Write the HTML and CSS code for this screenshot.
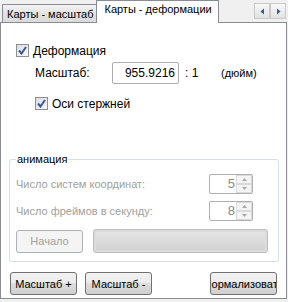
FILE: index.html
```html
<!DOCTYPE html>
<html lang="ru">
<head>
    <meta charset="UTF-8">
    <title>Карты - деформации</title>
    <link rel="stylesheet" href="styles.css">
</head>
<body>
    <div class="window">
        <div class="tab-strip">
            <div class="tab">Карты - масштаб</div>
            <div class="tab active">Карты - деформации</div>
            <div class="scroller">
                <span class="arrow"><svg width="7" height="7" viewBox="0 0 7 7"><path d="M5 0.5 L1.5 3.5 L5 6.5 Z" fill="#3c5a8c"/></svg></span>
                <span class="arrow"><svg width="7" height="7" viewBox="0 0 7 7"><path d="M2 0.5 L5.5 3.5 L2 6.5 Z" fill="#3c5a8c"/></svg></span>
            </div>
        </div>

        <div class="panel">
            <label class="check-row">
                <span class="box"><svg width="9" height="9" viewBox="0 0 9 9"><path d="M1 4.5 L3.5 7.5 L8 1" stroke="#3a55a0" stroke-width="2" fill="none"/></svg></span>
                Деформация
            </label>

            <div class="scale-row">
                <span class="scale-label">Масштаб:</span>
                <span class="field">955.9216</span>
                <span class="ratio">: 1</span>
                <span class="unit">(дюйм)</span>
            </div>

            <label class="check-row sub">
                <span class="box"><svg width="9" height="9" viewBox="0 0 9 9"><path d="M1 4.5 L3.5 7.5 L8 1" stroke="#3a55a0" stroke-width="2" fill="none"/></svg></span>
                Оси стержней
            </label>

            <fieldset class="group">
                <legend>анимация</legend>
                <div class="spin-row">
                    <span>Число систем координат:</span>
                    <span class="spin">
                        <span class="spin-value">5</span>
                        <span class="spin-buttons">
                            <span class="spin-btn"><svg width="5" height="3" viewBox="0 0 5 3"><path d="M0 3 L2.5 0 L5 3 Z" fill="#a8a8a8"/></svg></span>
                            <span class="spin-btn"><svg width="5" height="3" viewBox="0 0 5 3"><path d="M0 0 L2.5 3 L5 0 Z" fill="#a8a8a8"/></svg></span>
                        </span>
                    </span>
                </div>
                <div class="spin-row">
                    <span>Число фреймов в секунду:</span>
                    <span class="spin">
                        <span class="spin-value">8</span>
                        <span class="spin-buttons">
                            <span class="spin-btn"><svg width="5" height="3" viewBox="0 0 5 3"><path d="M0 3 L2.5 0 L5 3 Z" fill="#a8a8a8"/></svg></span>
                            <span class="spin-btn"><svg width="5" height="3" viewBox="0 0 5 3"><path d="M0 0 L2.5 3 L5 0 Z" fill="#a8a8a8"/></svg></span>
                        </span>
                    </span>
                </div>
                <div class="play-row">
                    <button class="btn disabled">Начало</button>
                    <div class="progress"></div>
                </div>
            </fieldset>

            <div class="bottom-row">
                <button class="btn">Масштаб +</button>
                <button class="btn">Масштаб -</button>
                <button class="btn clip"><span>Нормализовать</span></button>
            </div>
        </div>
    </div>
</body>
</html>
```

FILE: styles.css
```css
body {
    margin: 0;
    background: #f0f0f0;
    font-family: "Liberation Sans", Arial, sans-serif;
    font-size: 12px;
    color: #000;
}
.window {
    width: 287px;
    height: 299px;
    display: flex;
    flex-direction: column;
}
.tab-strip {
    height: 22px;
    display: flex;
    align-items: flex-end;
    padding-left: 2px;
    position: relative;
    z-index: 1;
    font-size: 11px;
}
.tab {
    height: 17px;
    line-height: 18px;
    padding: 0 3px 0 4px;
    border: 1px solid #898c95;
    border-bottom: none;
    background: linear-gradient(#f2f2f2, #e3e3e3 50%, #dadada);
    white-space: nowrap;
}
.tab.active {
    height: 22px;
    line-height: 17px;
    margin-left: -1px;
    padding: 0 6px 0 7px;
    background: #fff;
    margin-bottom: -1px;
}
.scroller {
    margin-left: auto;
    align-self: flex-start;
    margin-top: 3px;
    margin-right: 1px;
    display: flex;
}
.arrow {
    width: 14px;
    height: 14px;
    border: 1px solid #c9c9c9;
    background: linear-gradient(#f7f7f7, #e2e2e2);
    display: flex;
    align-items: center;
    justify-content: center;
}
.panel {
    flex: 1;
    background: #fff;
    border: 1px solid #898c95;
    padding: 21px 8px 0 15px;
    display: flex;
    flex-direction: column;
}
.check-row {
    display: flex;
    align-items: center;
    gap: 4px;
    height: 13px;
}
.check-row.sub {
    margin-top: 13px;
    margin-left: 19px;
}
.box {
    width: 11px;
    height: 11px;
    border: 1px solid #8e8f8f;
    background: linear-gradient(135deg, #dcdcdc, #fafafa);
    display: flex;
    align-items: center;
    justify-content: center;
}
.scale-row {
    display: flex;
    align-items: center;
    margin-top: 5px;
    margin-left: 19px;
    height: 22px;
}
.scale-label {
    width: 77px;
}
.field {
    width: 62px;
    height: 20px;
    line-height: 20px;
    border: 1px solid #abadb3;
    border-radius: 2px;
    text-align: right;
    padding-right: 3px;
}
.ratio {
    margin-left: 6px;
    width: 36px;
}
.unit {
    font-size: 11px;
}
.group {
    margin: 43px 0 0 -7px;
    width: 270px;
    padding: 9px 6px 0 6px;
    border: 1px solid #d5dfe5;
    border-radius: 3px;
    height: 109px;
    box-sizing: border-box;
}
.group legend {
    padding: 0 1px;
    font-size: 11px;
}
.spin-row {
    display: flex;
    justify-content: space-between;
    align-items: center;
    height: 20px;
    margin-bottom: 7px;
    color: #a0a0a0;
    padding-right: 19px;
    font-size: 11px;
}
.spin {
    width: 42px;
    height: 18px;
    border: 1px solid #afafaf;
    border-radius: 2px;
    display: flex;
}
.spin-value {
    flex: 1;
    text-align: right;
    padding-right: 1px;
    line-height: 18px;
    font-size: 13px;
    color: #8a8a8a;
}
.spin-buttons {
    width: 16px;
    display: flex;
    flex-direction: column;
}
.spin-btn {
    flex: 1;
    border: 1px solid #dadada;
    background: #f4f4f4;
    display: flex;
    align-items: center;
    justify-content: center;
}
.play-row {
    display: flex;
    gap: 10px;
    align-items: center;
    margin-top: 8px;
}
.btn {
    height: 23px;
    border: 1px solid #707070;
    border-radius: 3px;
    background: linear-gradient(#f2f2f2 0%, #ebebeb 45%, #dddddd 50%, #cfcfcf 100%);
    font-family: inherit;
    font-size: 11px;
    padding: 0;
    color: #000;
}
.btn.disabled {
    width: 67px;
    border-color: #adb2b5;
    background: #f4f4f4;
    color: #a0a0a0;
}
.progress {
    width: 175px;
    height: 24px;
    border: 1px solid #bcbcbc;
    border-radius: 3px;
    box-sizing: border-box;
    background: linear-gradient(#e6e6e6, #d0d0d0);
    box-shadow: inset 0 0 0 2px #dcdcdc;
}
.bottom-row {
    display: flex;
    gap: 8px;
    margin: 10px 0 0 -6px;
}
.bottom-row .btn {
    width: 67px;
}
.bottom-row .clip {
    margin-left: 50px;
    overflow: hidden;
    white-space: nowrap;
    display: flex;
    align-items: center;
    justify-content: center;
}
```
